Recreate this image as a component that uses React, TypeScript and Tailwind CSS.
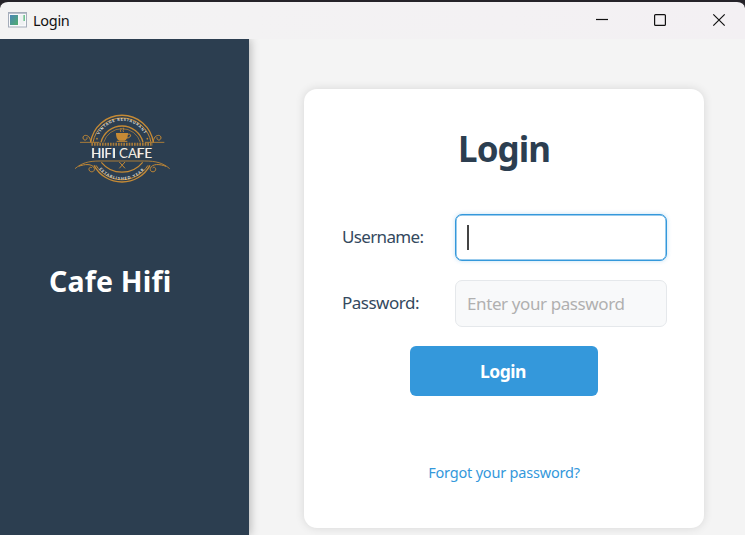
function WindowIcon() {
  return (
    <svg width="19" height="16" viewBox="0 0 19 16" className="shrink-0">
      <defs>
        <linearGradient id="pane" x1="0" y1="0" x2="1" y2="1">
          <stop offset="0" stopColor="#4a86b8" />
          <stop offset="1" stopColor="#4fae6c" />
        </linearGradient>
      </defs>
      <rect x="0.5" y="0.5" width="18" height="14.5" fill="#f8f9fb" stroke="#a5adba" />
      <path d="M1 1.5 H18" stroke="#b9c0cc" />
      <rect x="2" y="3" width="8" height="10" fill="url(#pane)" />
      <rect x="11.5" y="3" width="5" height="10" fill="#eef1f2" />
      <rect x="15.5" y="3" width="1.3" height="6" fill="#52b878" />
    </svg>
  );
}

function Logo() {
  return (
    <svg width="105" height="85" viewBox="0 0 315 255" fill="none" stroke="#c58a35" strokeWidth="4">
      <defs>
        <path id="topArc" d="M86 92 A77 77 0 0 1 226 92" />
        <path id="bottomArc" d="M84 187 A88 88 0 0 0 228 187" />
      </defs>
      <path d="M62 112 A95 95 0 0 1 250 112" />
      <path d="M69 112 A88.3 88.3 0 0 1 243 112" strokeWidth="3" />
      <path d="M93 112 A65 65 0 0 1 219 112" />
      <path d="M101 112 A57.4 57.4 0 0 1 211 112" strokeWidth="2" />
      <path d="M30 112 H88 M225 112 H283" strokeWidth="2.5" />
      <path d="M62 111 C61 87 38 87 39 99 C41 109 53 106 51 97 M250 111 C251 87 274 87 273 99 C271 109 259 106 261 97" strokeWidth="3" />
      <path d="M64 118 H249" strokeWidth="9" strokeDasharray="5 3" opacity="0.8" />
      <path d="M15 191 C35 174 55 168 90 168 H224 C259 168 279 174 299 191" strokeWidth="2.5" />
      <path d="M26 184 C44 177 67 175 73 190 C76 202 59 204 57 194 C56 188 62 184 66 189 M288 184 C270 177 247 175 241 190 C238 202 255 204 257 194 C258 188 252 184 248 189" strokeWidth="3" />
      <path d="M78 181 A92 92 0 0 0 234 181" strokeWidth="3" />
      <path d="M72 181 A95.6 95.6 0 0 0 240 181" />
      <path d="M94 172 A80 80 0 0 0 218 172" strokeWidth="3.5" />
      <path d="M148 171 L165 190 M165 171 L148 190" strokeWidth="3" />
      <path d="M138 84 H174 C174 99 168 105 164 107 H148 C142 104 138 98 138 84 Z" fill="#c58a35" stroke="none" />
      <path d="M173 88 C187 84 184 100 169 99 M140 109 H172" strokeWidth="3" />
      <path d="M153 81 C147 76 157 74 152 69 M161 81 C155 74 165 76 160 68" strokeWidth="2.5" />
      <circle cx="81" cy="101" r="2.5" fill="#c58a35" stroke="none" />
      <circle cx="232" cy="101" r="2.5" fill="#c58a35" stroke="none" />
      <g fill="#f1eee5" stroke="none" className="font-['Lato',sans-serif] font-bold">
        <text fontSize="11">
          <textPath href="#topArc" startOffset="3" textLength="166">VINTAGE RESTAURANT</textPath>
        </text>
        <text fontSize="11">
          <textPath href="#bottomArc" startOffset="6" textLength="152">ESTABLISHED YEAR</textPath>
        </text>
      </g>
      <g fill="#f1eee5" stroke="none" className="font-['Lato',sans-serif] font-normal">
        <text x="64" y="159" fontSize="41" textLength="72" lengthAdjust="spacingAndGlyphs">HIFI</text>
        <text x="147" y="159" fontSize="41" textLength="100" lengthAdjust="spacingAndGlyphs">CAFE</text>
      </g>
      <path d="M69 130 V159 M89 130 V159 M99 130 V159 M109 130 V159 M133 130 V159 M205 130 V159 M229 130 V159" stroke="#f1eee5" strokeWidth="4" />
    </svg>
  );
}

function TitleBar() {
  return (
    <header className="flex h-[39px] shrink-0 items-center justify-between rounded-t-lg border-t-2 border-[#252329] bg-gradient-to-r from-[#f3f3f3] to-[#f3f0f3] pl-2">
      <div className="flex items-center gap-[6px] pb-0.5">
        <WindowIcon />
        <span className="text-[14.5px] leading-5 tracking-[-0.3px] text-[#111]">Login</span>
      </div>
      <svg width="175" height="37" viewBox="0 0 175 37" fill="none" stroke="#111" strokeWidth="1.2">
        <path d="M26 17.5 H38" />
        <rect x="84.6" y="12.6" width="10.8" height="10.8" rx="1" />
        <path d="M143.3 12.3 L154.7 23.7 M154.7 12.3 L143.3 23.7" />
      </svg>
    </header>
  );
}

export default function App() {
  return (
    <div className="h-[535px] w-[745px] overflow-hidden bg-[#252329] font-['Noto_Sans','Open_Sans',sans-serif]">
      <div className="flex h-full flex-col">
        <TitleBar />
        <div className="flex min-h-0 flex-1 overflow-hidden bg-[#f4f4f4]">
          <aside className="flex w-[249px] shrink-0 flex-col bg-[#2c3e50] pt-[66px] shadow-[1px_0_9px_rgba(0,0,0,0.28)]">
            <div className="ml-[70px]">
              <Logo />
            </div>
            <h1 className="mt-[71px] ml-[49px] text-[28.5px] leading-10 font-bold tracking-[0.2px] whitespace-nowrap text-white">
              Cafe Hifi
            </h1>
          </aside>
          <main className="flex-1 pt-[50px] pl-[55px]">
            <section className="flex h-[439px] w-[400px] flex-col rounded-[13px] bg-white pt-[35px] shadow-[0_0_10px_rgba(0,0,0,0.12)]">
              <h2 className="text-center text-[35px] leading-[50px] font-bold tracking-[-1px] text-[#2c3e50]">
                Login
              </h2>
              <form className="mt-10 flex flex-col">
                <div className="flex h-[47px] items-center pl-[38px]">
                  <label className="w-[113px] pb-0.5 text-[17px] tracking-[-0.65px] text-[#34495e]">Username:</label>
                  <div className="flex h-[47px] w-[212px] items-center rounded-[7px] border-[1.5px] border-[#3498db] bg-white pl-[11px] shadow-[0_0_4px_rgba(52,152,219,0.3),inset_0_0_0_0.5px_#3498db]">
                    <div className="h-[25px] w-[1.5px] bg-[#444]" />
                  </div>
                </div>
                <div className="mt-[19px] flex h-[47px] items-center pl-[38px]">
                  <label className="w-[113px] pb-0.5 text-[17px] tracking-[-0.5px] text-[#34495e]">Password:</label>
                  <div className="flex h-[47px] w-[212px] items-center rounded-[7px] border border-[#e5e8eb] bg-[#f8f9fa] pl-[11px] text-[17px] tracking-[-0.4px] text-[#b0b0b0]">
                    Enter your password
                  </div>
                </div>
                <button
                  type="button"
                  className="mt-[19px] ml-[106px] h-[50px] w-[188px] rounded-md bg-[#3498db] pr-[2px] text-[17.5px] font-bold tracking-[-0.5px] text-white"
                >
                  Login
                </button>
              </form>
              <a className="mt-[66px] text-center text-[14.5px] leading-5 tracking-[-0.2px] text-[#3498db]">Forgot your password?</a>
            </section>
          </main>
        </div>
      </div>
    </div>
  );
}
